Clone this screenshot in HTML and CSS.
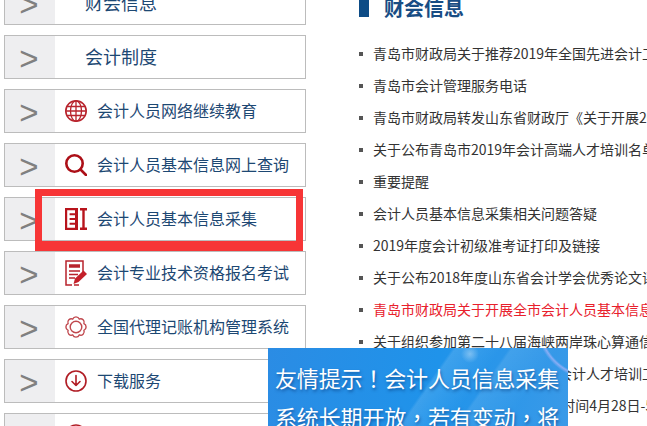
FILE: index.html
```html
<!DOCTYPE html>
<html lang="zh-CN">
<head>
<meta charset="utf-8">
<title>财会信息</title>
<link rel="stylesheet" href="styles.css">
</head>
<body>
<div class="page">
  <nav class="side">
    <a class="item"><span class="arrow">&gt;</span><span class="plain">财会信息</span></a>
    <a class="item"><span class="arrow">&gt;</span><span class="plain">会计制度</span></a>
    <a class="item"><span class="arrow">&gt;</span>
      <svg class="icon" viewBox="0 0 22 22" fill="none" stroke="#b8232c" stroke-width="1.3"><circle cx="11" cy="11" r="10.200" stroke-width="1.600"/><ellipse cx="11" cy="11" rx="5.500" ry="10.200"/><path d="M11 1v20M1.600 6.500h18.800M1 11h20M1.600 15.500h18.800"/></svg>
      <span class="label">会计人员网络继续教育</span></a>
    <a class="item"><span class="arrow">&gt;</span>
      <svg class="icon" viewBox="0 0 22 22" fill="none" stroke="#ac0f17" stroke-width="2.600"><circle cx="9.500" cy="9.500" r="8.200"/><path d="M15.500 15.500l5.500 5.500" stroke-linecap="round"/></svg>
      <span class="label">会计人员基本信息网上查询</span></a>
    <a class="item"><span class="arrow">&gt;</span>
      <svg class="icon" viewBox="0 0 22 22" fill="#b8141c"><path d="M0 0h13v22H0V0zm2.200 2.200v17.600h7.800v-3H4.600v-2h5.400v-2.800H4.600v-2h5.400V7.200H4.600v-2h5.400v-3H2.200z"/><path d="M15 0h7v2.400h-2.300v17.200H22V22h-7v-2.400h2.300V2.400H15z"/></svg>
      <span class="label">会计人员基本信息采集</span></a>
    <a class="item"><span class="arrow">&gt;</span>
      <svg class="icon icon-tall" viewBox="0 0 22 26" fill="none" stroke="#b8232c"><path d="M7 25H1V1h17v11" stroke-width="1.500"/><path d="M4 6h11" stroke-width="3.500"/><path d="M4 11h11M4 14.500h9M4 18h6" stroke-width="1.500"/><path d="M9 25h5" stroke-width="1.500"/><path d="M8.500 24l1.500-5.500 8.500-8 3.500 3.500-8.500 8z" fill="#c4202a" stroke="none"/></svg>
      <span class="label">会计专业技术资格报名考试</span></a>
    <a class="item"><span class="arrow">&gt;</span>
      <svg class="icon" viewBox="0 0 22 22" fill="none" stroke="#c0484e" stroke-width="1.400"><circle cx="11" cy="11" r="5.800"/><path d="M18.950 7.710A3.600 3.600 0 0 1 18.950 14.290A3.600 3.600 0 0 1 14.290 18.950A3.600 3.600 0 0 1 7.710 18.950A3.600 3.600 0 0 1 3.050 14.290A3.600 3.600 0 0 1 3.050 7.710A3.600 3.600 0 0 1 7.710 3.050A3.600 3.600 0 0 1 14.290 3.050A3.600 3.600 0 0 1 18.950 7.710z"/></svg>
      <span class="label">全国代理记账机构管理系统</span></a>
    <a class="item"><span class="arrow">&gt;</span>
      <svg class="icon" viewBox="0 0 22 22" fill="none" stroke="#b01c24" stroke-width="1.600"><circle cx="11" cy="11" r="10"/><path d="M11 5.500v10M7 11.500l4 4 4-4" stroke-linecap="round" stroke-linejoin="round"/></svg>
      <span class="label">下载服务</span></a>
    <a class="item"><span class="arrow">&gt;</span>
      <svg class="icon" viewBox="0 0 22 22" fill="none" stroke="#b01c24" stroke-width="1.600"><circle cx="11" cy="11" r="10"/></svg>
      <span class="label">在线服务</span></a>
  </nav>
  <main class="content">
    <h2 class="title">财会信息</h2>
    <ul class="news">
      <li>青岛市财政局关于推荐2019年全国先进会计工作者的通知</li>
      <li>青岛市会计管理服务电话</li>
      <li>青岛市财政局转发山东省财政厅《关于开展2019年度会计工作的通知》</li>
      <li>关于公布青岛市2019年会计高端人才培训名单的通知</li>
      <li>重要提醒</li>
      <li>会计人员基本信息采集相关问题答疑</li>
      <li>2019年度会计初级准考证打印及链接</li>
      <li>关于公布2018年度山东省会计学会优秀论文评选结果的通知</li>
      <li class="hot">青岛市财政局关于开展全市会计人员基本信息采集工作的通知</li>
      <li>关于组织参加第二十八届海峡两岸珠心算通信比赛的通知</li>
      <li>关于举办2019年青岛市财政局会计人才培训工作的通知</li>
      <li>关于2019年度会计证考试报名 时间4月28日-5月10日</li>
    </ul>
  </main>
</div>
<div class="highlight"></div>
<aside class="notice">
  <p>友情提示<span class="punct" lang="zh-Hant">！</span>会计人员信息采集</p>
  <p>系统长期开放<span class="punct" lang="zh-Hant">，</span>若有变动<span class="punct" lang="zh-Hant">，</span>将</p>
</aside>
</body>
</html>
```
FILE: styles.css
```css
html, body { margin: 0; padding: 0; height: 100%; overflow: hidden; background: #fff; }
body { font-family: "Noto Sans CJK SC", "Noto Sans", sans-serif; position: relative; }
.page { display: flex; margin-top: -19px; padding-left: 4px; }
.side { width: 302px; flex: none; display: flex; flex-direction: column; gap: 10px; }
.item { display: flex; align-items: center; height: 44px; box-sizing: border-box; border: 1px solid #bcbcbc; background: #fff; color: #1d4873; }
.arrow { flex: none; width: 50px; height: 100%; background: #eeeef0; color: #808080; font: 33px/46px "Liberation Sans", sans-serif; text-align: center; margin-right: 10px; padding-right: 2px; box-sizing: border-box; overflow: hidden; }
.plain { font-size: 18px; margin-left: 20px; padding-bottom: 2px; }
.icon { flex: none; width: 22px; height: 22px; margin-right: 10px; }
.icon-tall { height: 26px; }
.label { font-size: 16px; white-space: nowrap; padding-bottom: 2px; }
.content { margin-left: 53px; white-space: nowrap; flex: 1; min-width: 0; padding-top: 12px; }
.title { margin: 0; height: 24px; border-left: 10px solid #0d4c86; padding-left: 15px; font-size: 20px; line-height: 30px; font-weight: 700; color: #184d84; box-sizing: border-box; }
.news { list-style: none; margin: 21px 0 0; padding: 0; }
.news li { position: relative; padding-left: 14px; height: 32px; font-size: 14px; line-height: 30px; color: #333; }
.news li::before { content: ""; position: absolute; left: 0; top: 14px; width: 4px; height: 4px; background: #555; }
.news .hot { color: #e8202c; }
.highlight { position: absolute; left: 35px; top: 189px; width: 268px; height: 62px; box-sizing: border-box; border: solid #f73536; border-width: 7px 7px 10px; }
.notice { position: absolute; left: 268px; top: 348px; width: 300px; height: 78px; overflow: hidden; padding: 10px 7px 0; box-sizing: border-box; color: #fff; font-size: 22px; letter-spacing: -.15px; line-height: 39px; text-shadow: 1px 2px 3px rgba(0, 40, 100, .5); background: radial-gradient(circle at 325px -25px, transparent 52px, rgba(205, 190, 255, .55) 54px, transparent 57px), radial-gradient(circle at 202px 6px, rgba(255,255,255,.35), transparent 9px), linear-gradient(125deg, transparent 52%, rgba(255,255,255,.13) 53%, transparent 66%), linear-gradient(125deg, transparent 68%, rgba(255,255,255,.1) 69%, transparent 82%), linear-gradient(100deg, #2b8ce4, #1f93ea 55%, #3a9ae8); }
.notice p { margin: 0; white-space: nowrap; }
.punct { font-family: "Noto Sans CJK TC", sans-serif; }
```
